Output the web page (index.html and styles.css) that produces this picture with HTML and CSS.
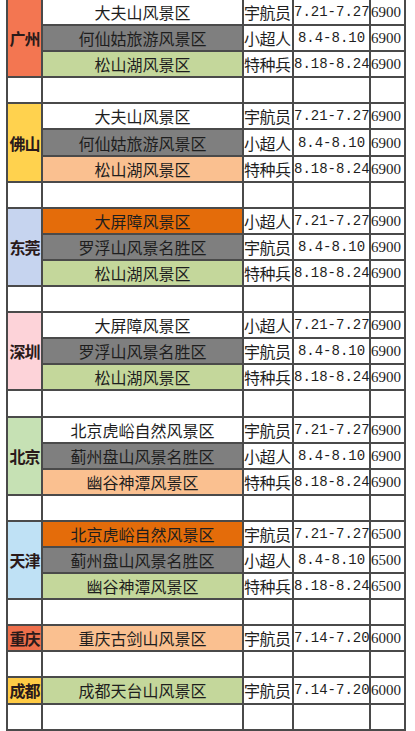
FILE: index.html
```html
<!DOCTYPE html>
<html lang="zh-CN">
<head>
<meta charset="utf-8">
<link rel="stylesheet" href="styles.css">
</head>
<body>
<table class="sheet">
<colgroup><col class="c-city"><col class="c-spot"><col class="c-role"><col class="c-date"><col class="c-price"></colgroup>
<tbody>
<tr><td class="city gz" rowspan="3">广州</td><td class="spot">大夫山风景区</td><td class="role">宇航员</td><td class="date">7.21-7.27</td><td class="price">6900</td></tr>
<tr><td class="spot gray">何仙姑旅游风景区</td><td class="role">小超人</td><td class="date">8.4-8.10</td><td class="price">6900</td></tr>
<tr><td class="spot green">松山湖风景区</td><td class="role">特种兵</td><td class="date">8.18-8.24</td><td class="price">6900</td></tr>
<tr class="blank"><td></td><td></td><td></td><td></td><td></td></tr>

<tr><td class="city fs" rowspan="3">佛山</td><td class="spot">大夫山风景区</td><td class="role">宇航员</td><td class="date">7.21-7.27</td><td class="price">6900</td></tr>
<tr><td class="spot gray">何仙姑旅游风景区</td><td class="role">小超人</td><td class="date">8.4-8.10</td><td class="price">6900</td></tr>
<tr><td class="spot peach">松山湖风景区</td><td class="role">特种兵</td><td class="date">8.18-8.24</td><td class="price">6900</td></tr>
<tr class="blank"><td></td><td></td><td></td><td></td><td></td></tr>

<tr><td class="city dg" rowspan="3">东莞</td><td class="spot orange">大屏障风景区</td><td class="role">小超人</td><td class="date">7.21-7.27</td><td class="price">6900</td></tr>
<tr><td class="spot gray">罗浮山风景名胜区</td><td class="role">宇航员</td><td class="date">8.4-8.10</td><td class="price">6900</td></tr>
<tr><td class="spot green">松山湖风景区</td><td class="role">特种兵</td><td class="date">8.18-8.24</td><td class="price">6900</td></tr>
<tr class="blank"><td></td><td></td><td></td><td></td><td></td></tr>

<tr><td class="city sz" rowspan="3">深圳</td><td class="spot">大屏障风景区</td><td class="role">小超人</td><td class="date">7.21-7.27</td><td class="price">6900</td></tr>
<tr><td class="spot gray">罗浮山风景名胜区</td><td class="role">宇航员</td><td class="date">8.4-8.10</td><td class="price">6900</td></tr>
<tr><td class="spot green">松山湖风景区</td><td class="role">特种兵</td><td class="date">8.18-8.24</td><td class="price">6900</td></tr>
<tr class="blank"><td></td><td></td><td></td><td></td><td></td></tr>

<tr><td class="city bj" rowspan="3">北京</td><td class="spot">北京虎峪自然风景区</td><td class="role">宇航员</td><td class="date">7.21-7.27</td><td class="price">6900</td></tr>
<tr><td class="spot gray">蓟州盘山风景名胜区</td><td class="role">小超人</td><td class="date">8.4-8.10</td><td class="price">6900</td></tr>
<tr><td class="spot peach">幽谷神潭风景区</td><td class="role">特种兵</td><td class="date">8.18-8.24</td><td class="price">6900</td></tr>
<tr class="blank"><td></td><td></td><td></td><td></td><td></td></tr>

<tr><td class="city tj" rowspan="3">天津</td><td class="spot orange">北京虎峪自然风景区</td><td class="role">宇航员</td><td class="date">7.21-7.27</td><td class="price">6500</td></tr>
<tr><td class="spot gray">蓟州盘山风景名胜区</td><td class="role">小超人</td><td class="date">8.4-8.10</td><td class="price">6500</td></tr>
<tr><td class="spot green">幽谷神潭风景区</td><td class="role">特种兵</td><td class="date">8.18-8.24</td><td class="price">6500</td></tr>
<tr class="blank"><td></td><td></td><td></td><td></td><td></td></tr>

<tr><td class="city cq">重庆</td><td class="spot peach">重庆古剑山风景区</td><td class="role">宇航员</td><td class="date">7.14-7.20</td><td class="price">6000</td></tr>
<tr class="blank"><td></td><td></td><td></td><td></td><td></td></tr>

<tr><td class="city cd">成都</td><td class="spot green">成都天台山风景区</td><td class="role">宇航员</td><td class="date">7.14-7.20</td><td class="price">6000</td></tr>
<tr class="blank"><td></td><td></td><td></td><td></td><td></td></tr>
</tbody>
</table>
</body>
</html>
```
FILE: styles.css
```css
html, body {
  margin: 0;
  padding: 0;
  background: #ffffff;
}
body {
  padding-left: 6px;
}
.sheet {
  border-collapse: collapse;
  table-layout: fixed;
  width: 400px;
  margin-top: -2px;
  font-family: "Noto Sans CJK SC", "Noto Sans", sans-serif;
  font-size: 16px;
  color: #1e1e1e;
}
.c-city { width: 35px; }
.c-spot { width: 201px; }
.c-role { width: 50px; }
.c-date { width: 77px; }
.c-price { width: 35px; }
.sheet td {
  border: 2px solid #4a4a4a;
  height: 22px;
  padding: 0;
  line-height: 22px;
  white-space: nowrap;
  overflow: visible;
  background: #ffffff;
}
.sheet tr { height: 26.1px; }
.city {
  text-align: center;
  font-weight: bold;
  color: #2a1a1a;
  letter-spacing: -1px;
}
.gz { background: #f37651 !important; }
.fs { background: #ffd24e !important; }
.dg { background: #c6d4ef !important; }
.sz { background: #fdd3d9 !important; }
.bj { background: #c6e1b4 !important; }
.tj { background: #bfe1f5 !important; }
.cq { background: #ee6f4b !important; }
.cd { background: #ffcb45 !important; }
.spot { text-align: center; }
.sheet td.gray { background: #7f7f7f; }
.sheet td.green { background: #c4d79b; }
.sheet td.peach { background: #fac090; }
.sheet td.orange { background: #e46c0a; }
.role {
  text-align: left;
  letter-spacing: -0.5px;
}
.date {
  font-family: "Liberation Mono", "DejaVu Sans Mono", monospace;
  font-size: 14px;
  text-align: center;
}
.price {
  font-family: "Liberation Serif", serif;
  font-size: 15px;
  text-align: left;
  padding-left: 1px;
}
```
